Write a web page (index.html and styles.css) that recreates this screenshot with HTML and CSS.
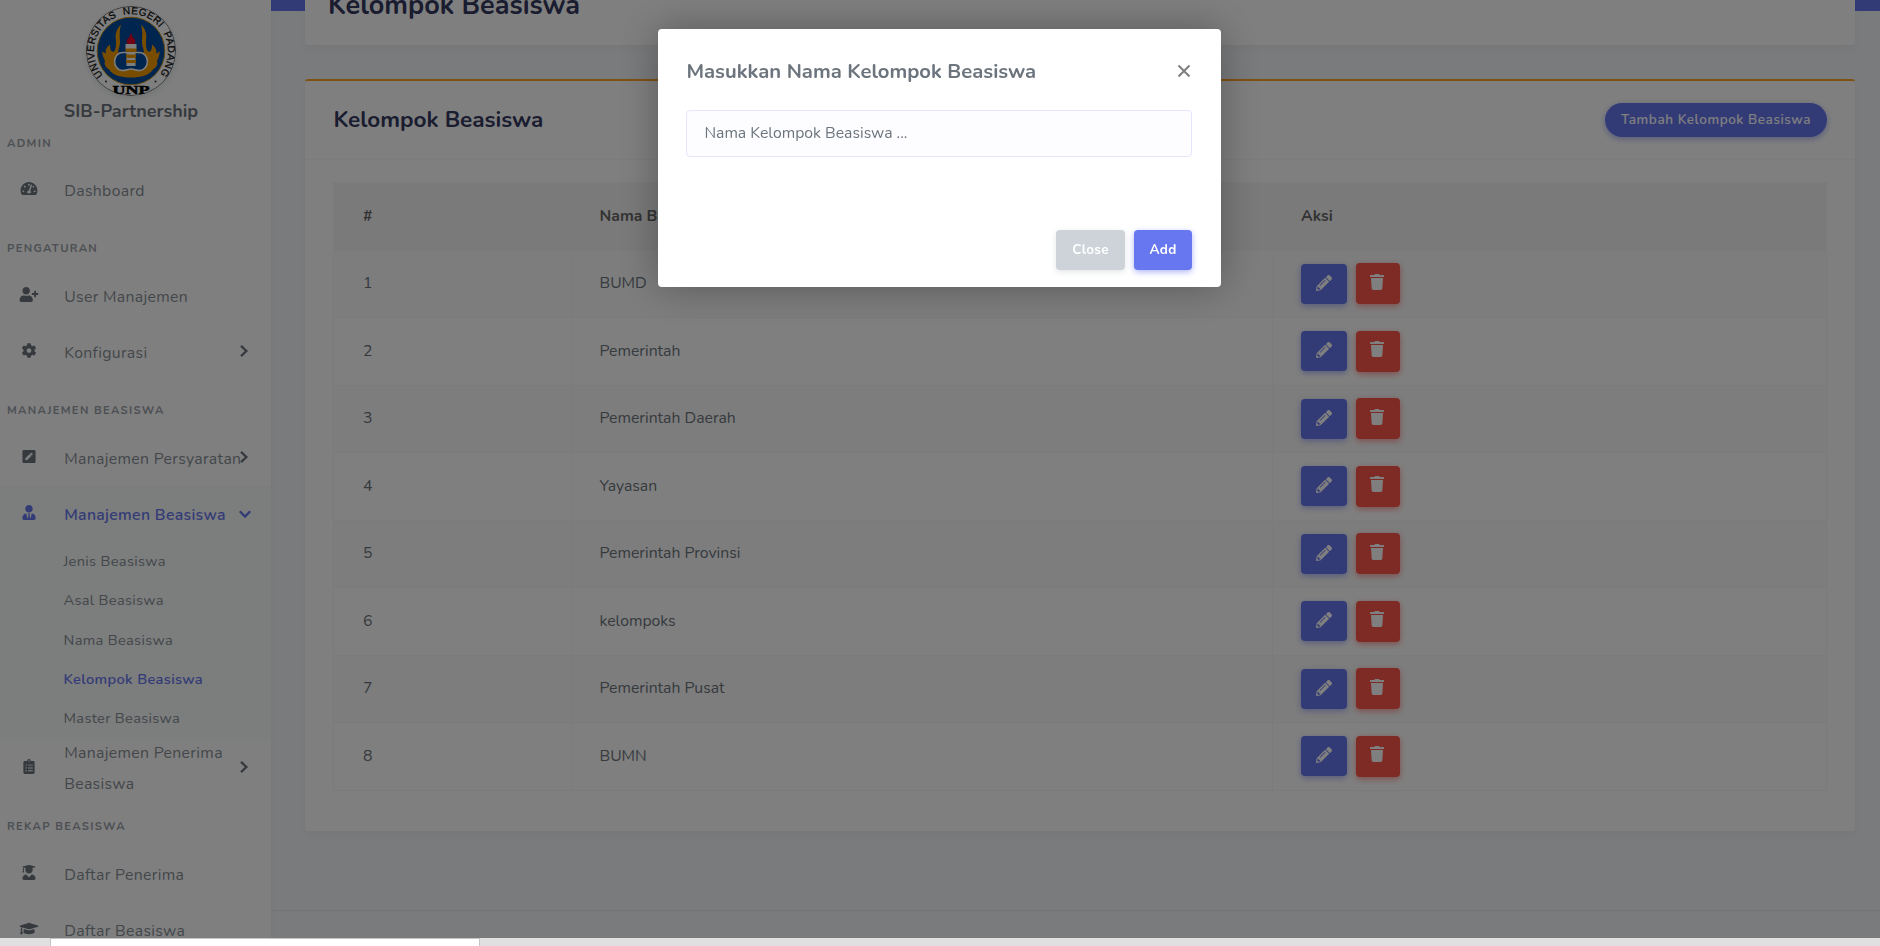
FILE: index.html
```html
<!DOCTYPE html>
<html lang="id">
<head>
<meta charset="utf-8">
<title>Kelompok Beasiswa</title>
<link rel="stylesheet" href="styles.css">
</head>
<body>
<svg class="sprite" aria-hidden="true">
  <symbol id="gauge" viewBox="0 0 576 512"><path d="M288 32C128.94 32 0 160.94 0 320c0 52.8 14.25 102.26 39.06 144.8 5.61 9.62 16.3 15.2 27.44 15.2h443c11.14 0 21.83-5.58 27.44-15.2C561.75 422.26 576 372.8 576 320c0-159.06-128.94-288-288-288zm0 64c14.71 0 26.58 10.13 30.32 23.65-1.11 2.26-2.64 4.23-3.45 6.67l-9.22 27.67c-5.13 3.49-10.97 6.01-17.64 6.01-17.67 0-32-14.33-32-32S270.33 96 288 96zM96 384c-17.67 0-32-14.33-32-32s14.33-32 32-32 32 14.33 32 32-14.33 32-32 32zm48-160c-17.67 0-32-14.33-32-32s14.33-32 32-32 32 14.33 32 32-14.33 32-32 32zm246.77-72.41l-61.33 184C343.13 347.33 352 364.54 352 384c0 11.72-3.38 22.55-8.88 32H232.88c-5.5-9.45-8.88-20.28-8.88-32 0-33.94 26.5-61.43 59.9-63.59l61.34-184.01c4.17-12.56 17.73-19.45 30.36-15.17 12.57 4.19 19.35 17.79 15.17 30.36zm14.66 57.2l15.52-46.55c3.47-1.29 7.13-2.23 11.05-2.23 17.67 0 32 14.33 32 32s-14.33 32-32 32c-11.38-.01-20.89-6.28-26.57-15.22zM480 384c-17.67 0-32-14.33-32-32s14.33-32 32-32 32 14.33 32 32-14.33 32-32 32z"/></symbol>
  <symbol id="user-plus" viewBox="0 0 640 512"><path d="M624 208h-64v-64c0-8.8-7.2-16-16-16h-32c-8.8 0-16 7.2-16 16v64h-64c-8.8 0-16 7.2-16 16v32c0 8.8 7.2 16 16 16h64v64c0 8.8 7.2 16 16 16h32c8.8 0 16-7.2 16-16v-64h64c8.8 0 16-7.2 16-16v-32c0-8.8-7.2-16-16-16zm-400 48c70.7 0 128-57.3 128-128S294.7 0 224 0 96 57.3 96 128s57.3 128 128 128zm89.6 32h-16.7c-22.2 10.2-46.9 16-72.9 16s-50.6-5.8-72.9-16h-16.7C60.2 288 0 348.2 0 422.4V464c0 26.5 21.5 48 48 48h352c26.5 0 48-21.5 48-48v-41.6c0-74.2-60.2-134.4-134.4-134.4z"/></symbol>
  <symbol id="cog" viewBox="0 0 512 512"><path d="M487.4 315.7l-42.6-24.6c4.3-23.2 4.3-47 0-70.2l42.6-24.6c4.9-2.8 7.1-8.6 5.5-14-11.1-35.6-30-67.8-54.7-94.6-3.8-4.1-10-5.1-14.8-2.3L380.8 110c-17.9-15.4-38.5-27.3-60.8-35.1V25.8c0-5.6-3.9-10.5-9.4-11.7-36.7-8.2-74.3-7.8-109.2 0-5.5 1.2-9.4 6.1-9.4 11.7V75c-22.2 7.9-42.8 19.8-60.8 35.1L88.7 85.5c-4.9-2.8-11-1.9-14.8 2.3-24.7 26.7-43.6 58.9-54.7 94.6-1.7 5.4.6 11.2 5.5 14L67.3 221c-4.3 23.2-4.3 47 0 70.2l-42.6 24.6c-4.9 2.8-7.1 8.6-5.5 14 11.1 35.6 30 67.8 54.7 94.6 3.8 4.1 10 5.1 14.8 2.3l42.6-24.6c17.9 15.4 38.5 27.3 60.8 35.1v49.2c0 5.6 3.9 10.5 9.4 11.7 36.7 8.2 74.3 7.8 109.2 0 5.5-1.2 9.4-6.1 9.4-11.7v-49.2c22.2-7.9 42.8-19.8 60.8-35.1l42.6 24.6c4.9 2.8 11 1.9 14.8-2.3 24.7-26.7 43.6-58.9 54.7-94.6 1.5-5.5-.7-11.3-5.6-14.1zM256 336c-44.1 0-80-35.9-80-80s35.9-80 80-80 80 35.9 80 80-35.9 80-80 80z"/></symbol>
  <symbol id="pen-square" viewBox="0 0 448 512"><path d="M400 480H48c-26.5 0-48-21.5-48-48V80c0-26.5 21.5-48 48-48h352c26.5 0 48 21.5 48 48v352c0 26.5-21.5 48-48 48zM238.1 177.9L102.4 313.6l-6.3 57.1c-.8 7.6 5.6 14.1 13.3 13.3l57.1-6.3L302.2 242c2.3-2.3 2.3-6.1 0-8.5L246.7 178c-2.5-2.4-6.3-2.4-8.6-.1zM345 165.1L314.9 135c-9.4-9.4-24.6-9.4-33.9 0l-23.1 23.1c-2.3 2.3-2.3 6.1 0 8.5l55.5 55.5c2.3 2.3 6.1 2.3 8.5 0L345 199c9.3-9.3 9.3-24.5 0-33.9z"/></symbol>
  <symbol id="user-tie" viewBox="0 0 448 512"><path d="M224 256c70.7 0 128-57.3 128-128S294.7 0 224 0 96 57.3 96 128s57.3 128 128 128zm95.8 32.6L272 480l-32-136 32-56h-96l32 56-32 136-47.8-191.4C56.9 292 0 350.3 0 422.4V464c0 26.5 21.5 48 48 48h352c26.5 0 48-21.5 48-48v-41.6c0-72.1-56.9-130.4-128.2-133.8z"/></symbol>
  <symbol id="clipboard" viewBox="0 0 384 512"><path d="M336 64h-80c0-35.3-28.7-64-64-64s-64 28.7-64 64H48C21.5 64 0 85.5 0 112v352c0 26.5 21.5 48 48 48h288c26.5 0 48-21.5 48-48V112c0-26.5-21.5-48-48-48zM96 424c-13.3 0-24-10.7-24-24s10.7-24 24-24 24 10.7 24 24-10.7 24-24 24zm0-96c-13.3 0-24-10.7-24-24s10.7-24 24-24 24 10.7 24 24-10.7 24-24 24zm0-96c-13.3 0-24-10.7-24-24s10.7-24 24-24 24 10.7 24 24-10.7 24-24 24zm96-192c13.3 0 24 10.7 24 24s-10.7 24-24 24-24-10.7-24-24 10.7-24 24-24zm128 368c0 4.4-3.6 8-8 8H168c-4.4 0-8-3.6-8-8v-16c0-4.4 3.6-8 8-8h144c4.4 0 8 3.6 8 8v16zm0-96c0 4.4-3.6 8-8 8H168c-4.4 0-8-3.6-8-8v-16c0-4.4 3.6-8 8-8h144c4.4 0 8 3.6 8 8v16zm0-96c0 4.4-3.6 8-8 8H168c-4.4 0-8-3.6-8-8v-16c0-4.4 3.6-8 8-8h144c4.4 0 8 3.6 8 8v16z"/></symbol>
  <symbol id="user-graduate" viewBox="0 0 448 512"><path d="M319.4 320.6L224 416l-95.4-95.4C57.1 323.7 0 382.2 0 454.4v9.6c0 26.5 21.5 48 48 48h352c26.5 0 48-21.5 48-48v-9.6c0-72.2-57.1-130.7-128.6-133.8zM13.6 79.8l6.4 1.5v58.4c-7 4.2-12 11.5-12 20.3 0 8.4 4.6 15.4 11.1 19.7L3.5 242c-1.7 6.9 2.1 14 7.6 14h41.8c5.5 0 9.3-7.1 7.6-14l-15.6-62.3C51.4 175.4 56 168.4 56 160c0-8.8-5-16.1-12-20.3V87.1l66 15.9c-8.6 17.2-14 36.4-14 57 0 70.7 57.3 128 128 128s128-57.3 128-128c0-20.6-5.3-39.8-14-57l96.3-23.2c18.2-4.4 18.2-27.1 0-31.5l-190.4-46c-13-3.1-26.7-3.1-39.7 0L13.6 48.2c-18.1 4.4-18.1 27.2 0 31.6z"/></symbol>
  <symbol id="grad-cap" viewBox="0 0 640 512"><path d="M622.34 153.2L343.4 67.5c-15.2-4.67-31.6-4.67-46.79 0L17.66 153.2c-23.54 7.23-23.54 38.36 0 45.59l48.63 14.94c-10.67 13.19-17.23 29.28-17.88 46.9C38.78 266.15 32 276.11 32 288c0 10.78 5.68 19.85 13.86 25.65L20.33 428.53C18.11 438.52 25.71 448 35.94 448h56.11c10.24 0 17.84-9.48 15.62-19.47L82.14 313.65C90.32 307.85 96 298.78 96 288c0-11.57-6.47-21.25-15.66-26.87.76-15.02 8.44-28.3 20.69-36.72L296.6 284.5c9.06 2.78 26.44 6.25 46.79 0l278.95-85.7c23.55-7.24 23.55-38.36 0-45.6zM352.79 315.09c-28.53 8.76-52.84 3.92-65.59 0l-145.02-44.55L128 384c0 35.35 85.96 64 192 64s192-28.65 192-64l-14.18-113.47-145.03 44.56z"/></symbol>
  <symbol id="pencil" viewBox="0 0 512 512"><path d="M497.9 142.1l-46.1 46.1c-4.7 4.7-12.3 4.7-17 0l-111-111c-4.7-4.7-4.7-12.3 0-17l46.1-46.1c18.7-18.7 49.1-18.7 67.9 0l60.1 60.1c18.8 18.7 18.8 49.1 0 67.9zM284.2 99.8L21.6 362.4.4 483.9c-2.9 16.4 11.4 30.6 27.8 27.8l121.5-21.3 262.6-262.6c4.7-4.7 4.7-12.3 0-17l-111-111c-4.8-4.7-12.4-4.7-17.1 0zM124.1 339.9c-5.5-5.5-5.5-14.3 0-19.8l154-154c5.5-5.5 14.3-5.5 19.8 0s5.5 14.3 0 19.8l-154 154c-5.5 5.5-14.3 5.5-19.8 0zM88 424h48v36.3l-64.5 11.3-31.1-31.1L51.7 376H88v48z"/></symbol>
  <symbol id="trash" viewBox="0 0 448 512"><path d="M432 32H312l-9.4-18.7A24 24 0 0 0 281.1 0H166.8a23.72 23.72 0 0 0-21.4 13.3L136 32H16A16 16 0 0 0 0 48v32a16 16 0 0 0 16 16h416a16 16 0 0 0 16-16V48a16 16 0 0 0-16-16zM53.2 467a48 48 0 0 0 47.9 45h245.8a48 48 0 0 0 47.9-45L416 128H32z"/></symbol>
  <symbol id="chevron" viewBox="0 0 10 14"><path d="M2 1.8L7.4 7 2 12.2" fill="none" stroke="currentColor" stroke-width="2.3"/></symbol>
  <symbol id="chevron-down" viewBox="0 0 14 10"><path d="M1.8 2.2L7 7.6l5.2-5.4" fill="none" stroke="currentColor" stroke-width="2.3"/></symbol>
</svg>

<div class="app">
  <aside class="sidebar">
    <div class="brand">
      <svg class="logo" viewBox="0 0 90 90">
        <defs>
          <path id="ring" d="M17 69.3A37 37 0 1 1 73 69.3"/>
        </defs>
        <circle cx="45" cy="45" r="44.6" fill="#fff" stroke="#333" stroke-width=".7"/>
        <circle cx="45" cy="45" r="33.8" fill="#004a9f" stroke="#c79318" stroke-width="1"/>
        <text class="logo-ring" textLength="167" lengthAdjust="spacing"><textPath href="#ring">UNIVERSITAS&#160; NEGERI&#160; PADANG</textPath></text>
        <circle cx="20" cy="75.5" r="1" fill="#333"/><circle cx="69.5" cy="75.5" r="1" fill="#333"/>
        <path fill="#f29a00" d="M35 18.500c-5 5-6 10-5 16 0 5 0 9-2 11-3 1-4-2-4-7-4 3-5 6-4 9l-4-2c1 4 1 6 3 9-1 4 0 6 4 9 4 6 12 8 22 8s18-2 22-8c4-3 5-5 4-9 2-3 2-5 3-9l-4 2c1-3 0-6-4-9 0 5-1 8-4 7-2-2-2-6-2-11 1-6 0-11-5-16 2 8 1 12 1 18 0 4 2 7 2 10H32c0-3 2-6 2-10 0-6-1-10 1-18z"/>
        <path fill="#004a9f" stroke="#fff" stroke-width="1.500" d="M37 46.500c-11 0-11 17-1 18 4 0 6-1.500 9-1.500s5 1.500 9 1.500c10-1 10-18-1-18z"/>
        <path fill="#fff" d="M39.500 38h11v4l-1 4v14h-9V46l-1-4z"/>
        <path fill="#f29a00" d="M39.500 42.500h11v3.500h-11zM40 48.500h10v3.500H40zM40 54h10v3H40z"/>
        <path fill="#e4002b" d="M45 26.500l1.500 4.500c4 3 3.500 7 1 7h-5c-2.500 0-3-4 1-7z"/>
        <text class="logo-name" x="45" y="88" textLength="37" lengthAdjust="spacingAndGlyphs">UNP</text>
      </svg>
      <div class="brand-name">SIB-Partnership</div>
    </div>
    <div class="nav-head first">ADMIN</div>
    <a class="nav"><svg><use href="#gauge"/></svg><span>Dashboard</span></a>
    <div class="nav-head">PENGATURAN</div>
    <a class="nav"><svg><use href="#user-plus"/></svg><span>User Manajemen</span></a>
    <a class="nav"><svg><use href="#cog"/></svg><span>Konfigurasi</span><svg class="chev"><use href="#chevron"/></svg></a>
    <div class="nav-head">MANAJEMEN BEASISWA</div>
    <a class="nav"><svg><use href="#pen-square"/></svg><span>Manajemen Persyaratan</span><svg class="chev"><use href="#chevron"/></svg></a>
    <div class="open">
      <a class="nav active"><svg><use href="#user-tie"/></svg><span>Manajemen Beasiswa</span><svg class="chev down"><use href="#chevron-down"/></svg></a>
      <a class="sub">Jenis Beasiswa</a>
      <a class="sub">Asal Beasiswa</a>
      <a class="sub">Nama Beasiswa</a>
      <a class="sub current">Kelompok Beasiswa</a>
      <a class="sub">Master Beasiswa</a>
    </div>
    <a class="nav"><svg><use href="#clipboard"/></svg><span class="wrap">Manajemen Penerima Beasiswa</span><svg class="chev"><use href="#chevron"/></svg></a>
    <div class="nav-head">REKAP BEASISWA</div>
    <a class="nav"><svg><use href="#user-graduate"/></svg><span>Daftar Penerima</span></a>
    <a class="nav"><svg><use href="#grad-cap"/></svg><span>Daftar Beasiswa</span></a>
  </aside>

  <main class="main">
    <section class="page-head"><h1>Kelompok Beasiswa</h1></section>
    <section class="card">
      <header class="card-head"><h4>Kelompok Beasiswa</h4><button class="pill">Tambah Kelompok Beasiswa</button></header>
      <div class="card-body">
        <table>
          <colgroup><col class="c1"><col class="c2"><col></colgroup>
          <thead><tr><th>#</th><th>Nama Beasiswa</th><th>Aksi</th></tr></thead>
          <tbody>
            <tr><td>1</td><td>BUMD</td><td><div class="acts"><button class="edit"><svg><use href="#pencil"/></svg></button><button class="del"><svg><use href="#trash"/></svg></button></div></td></tr>
            <tr><td>2</td><td>Pemerintah</td><td><div class="acts"><button class="edit"><svg><use href="#pencil"/></svg></button><button class="del"><svg><use href="#trash"/></svg></button></div></td></tr>
            <tr><td>3</td><td>Pemerintah Daerah</td><td><div class="acts"><button class="edit"><svg><use href="#pencil"/></svg></button><button class="del"><svg><use href="#trash"/></svg></button></div></td></tr>
            <tr><td>4</td><td>Yayasan</td><td><div class="acts"><button class="edit"><svg><use href="#pencil"/></svg></button><button class="del"><svg><use href="#trash"/></svg></button></div></td></tr>
            <tr><td>5</td><td>Pemerintah Provinsi</td><td><div class="acts"><button class="edit"><svg><use href="#pencil"/></svg></button><button class="del"><svg><use href="#trash"/></svg></button></div></td></tr>
            <tr><td>6</td><td>kelompoks</td><td><div class="acts"><button class="edit"><svg><use href="#pencil"/></svg></button><button class="del"><svg><use href="#trash"/></svg></button></div></td></tr>
            <tr><td>7</td><td>Pemerintah Pusat</td><td><div class="acts"><button class="edit"><svg><use href="#pencil"/></svg></button><button class="del"><svg><use href="#trash"/></svg></button></div></td></tr>
            <tr><td>8</td><td>BUMN</td><td><div class="acts"><button class="edit"><svg><use href="#pencil"/></svg></button><button class="del"><svg><use href="#trash"/></svg></button></div></td></tr>
          </tbody>
        </table>
      </div>
    </section>
    <footer class="footer"></footer>
  </main>
</div>
<div class="taskbar"><div class="taskbar-window"></div></div>

<div class="backdrop">
  <div class="modal">
    <div class="modal-head"><h5>Masukkan Nama Kelompok Beasiswa</h5><svg class="close" viewBox="0 0 14 14"><path d="M1.5 1.5l11 11M12.5 1.5l-11 11"/></svg></div>
    <input class="field" type="text" placeholder="Nama Kelompok Beasiswa ...">
    <div class="modal-foot"><button class="btn gray">Close</button><button class="btn blue">Add</button></div>
  </div>
</div>
</body>
</html>
```
FILE: styles.css
```css
* { box-sizing: border-box; }
body {
  margin: 0;
  height: 946px;
  overflow: hidden;
  font-family: Nunito, Lato, sans-serif;
  font-size: 15.75px;
  color: #6c757d;
  background: #f4f6f9;
}
h1, h4, h5 { margin: 0; font-weight: 700; }
button { border: 0; padding: 0; font: inherit; }
svg { fill: currentColor; }
.sprite { display: none; }
.app { display: flex; height: 938px; overflow: hidden; }

/* Sidebar */
.sidebar {
  flex: none;
  width: 271px;
  background: #fff;
  box-shadow: 0 4px 8px rgba(0, 0, 0, .03);
  z-index: 1;
}
.brand { height: 124px; padding: 6px 9px 0 0; display: flex; flex-direction: column; align-items: center; }
.logo { width: 90px; height: 90px; flex: none; border-radius: 50%; box-shadow: 0 2px 6px #e1e5e8; }
.logo-ring { font: 400 10px "Liberation Sans", sans-serif; fill: #111; stroke: #111; stroke-width: .3; }
.logo-name { font: 700 12.5px "Liberation Serif", serif; fill: #000; text-anchor: middle; stroke: #000; stroke-width: .5; }
.brand-name { margin-top: 3px; line-height: 24px; font-size: 18px; font-weight: 700; }
.nav-head {
  height: 50px;
  padding: 21px 0 0 7px;
  line-height: 20px;
  font-size: 11.25px;
  font-weight: 700;
  letter-spacing: 1.32px;
  color: #98a0a8;
}
.nav-head.first { height: 38px; padding-top: 10px; }
.nav { position: relative; display: flex; align-items: center; height: 56px; padding-left: 18.2px; color: #868e96; letter-spacing: .34px; }
.nav > svg { flex: none; width: 22px; height: 15px; margin-bottom: 3px; color: #6c757d; }
.nav > span { margin: 1px 0 0 24px; white-space: nowrap; }
.nav > .wrap { width: 170px; line-height: 31px; white-space: normal; }
.nav > .chev { position: absolute; left: 239px; top: 20px; width: 10px; height: 14px; }
.nav > .chev.down { width: 14px; height: 10px; left: 238px; top: 23px; }
.open { height: 254px; background: #f8fafa; }
.nav.active, .nav.active > svg, .sub.current { color: #6777ef; }
.nav.active { font-weight: 600; }
.sub { display: block; height: 39.3px; padding-left: 63.5px; line-height: 39.8px; font-size: 14.6px; letter-spacing: .34px; color: #868e96; }
.sub.current { font-weight: 600; }

/* Main column */
.main { flex: 1; padding: 0 25px 0 34px; background: linear-gradient(#6777ef 11px, #f4f6f9 11px); }
.page-head { height: 45px; padding-left: 23px; border-radius: 0 0 3px 3px; background: #fff; box-shadow: 0 4px 8px rgba(0, 0, 0, .03); }
.page-head h1 { font-size: 27px; line-height: 32px; color: #34395e; transform: translateY(-10px); }
.card { margin-top: 34px; height: 752px; border-top: 2px solid #ffa426; border-radius: 3px; background: #fff; box-shadow: 0 4px 8px rgba(0, 0, 0, .03); }
.card-head { display: flex; justify-content: space-between; align-items: center; height: 79px; padding: 0 28px 1px 28.4px; border-bottom: 1px solid #f9f9f9; }
.card-head h4 { font-size: 22.5px; color: #34395e; }
.pill { width: 222px; height: 34px; border-radius: 17px; background: #6777ef; box-shadow: 0 2px 6px #acb5f6; color: #fff; font-size: 13.5px; font-weight: 600; letter-spacing: .56px; }
.card-body { padding: 22px 28px 0; }
table { width: 1494px; table-layout: fixed; border-collapse: collapse; }
.c1 { width: 237.5px; }
.c2 { width: 701.5px; }
th, td { height: 67.5px; padding: 0 28.5px 1px 28px; text-align: left; border: 1px solid #f6f6f6; }
th:first-child, td:first-child { padding-left: 29px; }
th { color: #666; font-weight: 700; background: #f5f5f5; }
tbody tr:nth-child(odd) { background: #fafafa; }
.acts { display: flex; align-items: center; gap: 9px; margin: 1px 0 0 -.5px; }
.acts button { display: flex; align-items: center; justify-content: center; border-radius: 4px; color: #fff; }
.acts .edit { width: 46px; height: 40px; background: #6777ef; box-shadow: 0 2px 6px #acb5f6; padding-bottom: 2px; }
.acts .del { width: 44px; height: 41px; padding: 0 1px 4px 0; background: #fc544b; box-shadow: 0 2px 6px #fd9b96; }
.acts svg { width: 16px; height: 16px; }
.footer { margin: 79px -25px 0 -34px; height: 28px; border-top: 1px solid #e3eaef; }

/* Window edge below the page */
.taskbar { position: relative; z-index: 3; height: 8px; padding-left: 50px; background: #e0e0e0; }
.taskbar-window { width: 430px; height: 8px; background: #fff; border: 1px solid #c4c4c4; border-bottom: 0; }

/* Dialog */
.backdrop { position: fixed; inset: 0; z-index: 2; background: rgba(0, 0, 0, .5); }
.modal { width: 563px; height: 258px; margin: 29px 0 0 658px; padding: 27px 29px 17px 28px; display: flex; flex-direction: column; background: #fff; border-radius: 4px; box-shadow: 0 0 40px rgba(0, 0, 0, .3); }
.modal-head { display: flex; justify-content: space-between; align-items: center; height: 30px; }
.modal-head h5 { font-size: 20.25px; padding-left: .4px; }
.close { width: 14px; height: 14px; margin-right: 1px; fill: none; stroke: #808080; stroke-width: 2.1; }
.field { margin-top: 24px; height: 47px; padding: 0 17px 1px 17.4px; font: inherit; color: #495057; background: #fdfdff; border: 1px solid #e4e6fc; border-radius: 4px; }
.field::placeholder { color: #6c757d; opacity: 1; }
.modal-foot { margin-top: auto; display: flex; justify-content: flex-end; gap: 9px; }
.btn { height: 40px; border-radius: 4px; color: #fff; font-size: 13.5px; font-weight: 700; letter-spacing: .3px; padding-bottom: 1px; }
.gray { width: 69px; background: #cdd3d8; box-shadow: 0 2px 6px #e1e5e8; }
.blue { width: 58px; background: #6777ef; box-shadow: 0 2px 6px #acb5f6; }
```
